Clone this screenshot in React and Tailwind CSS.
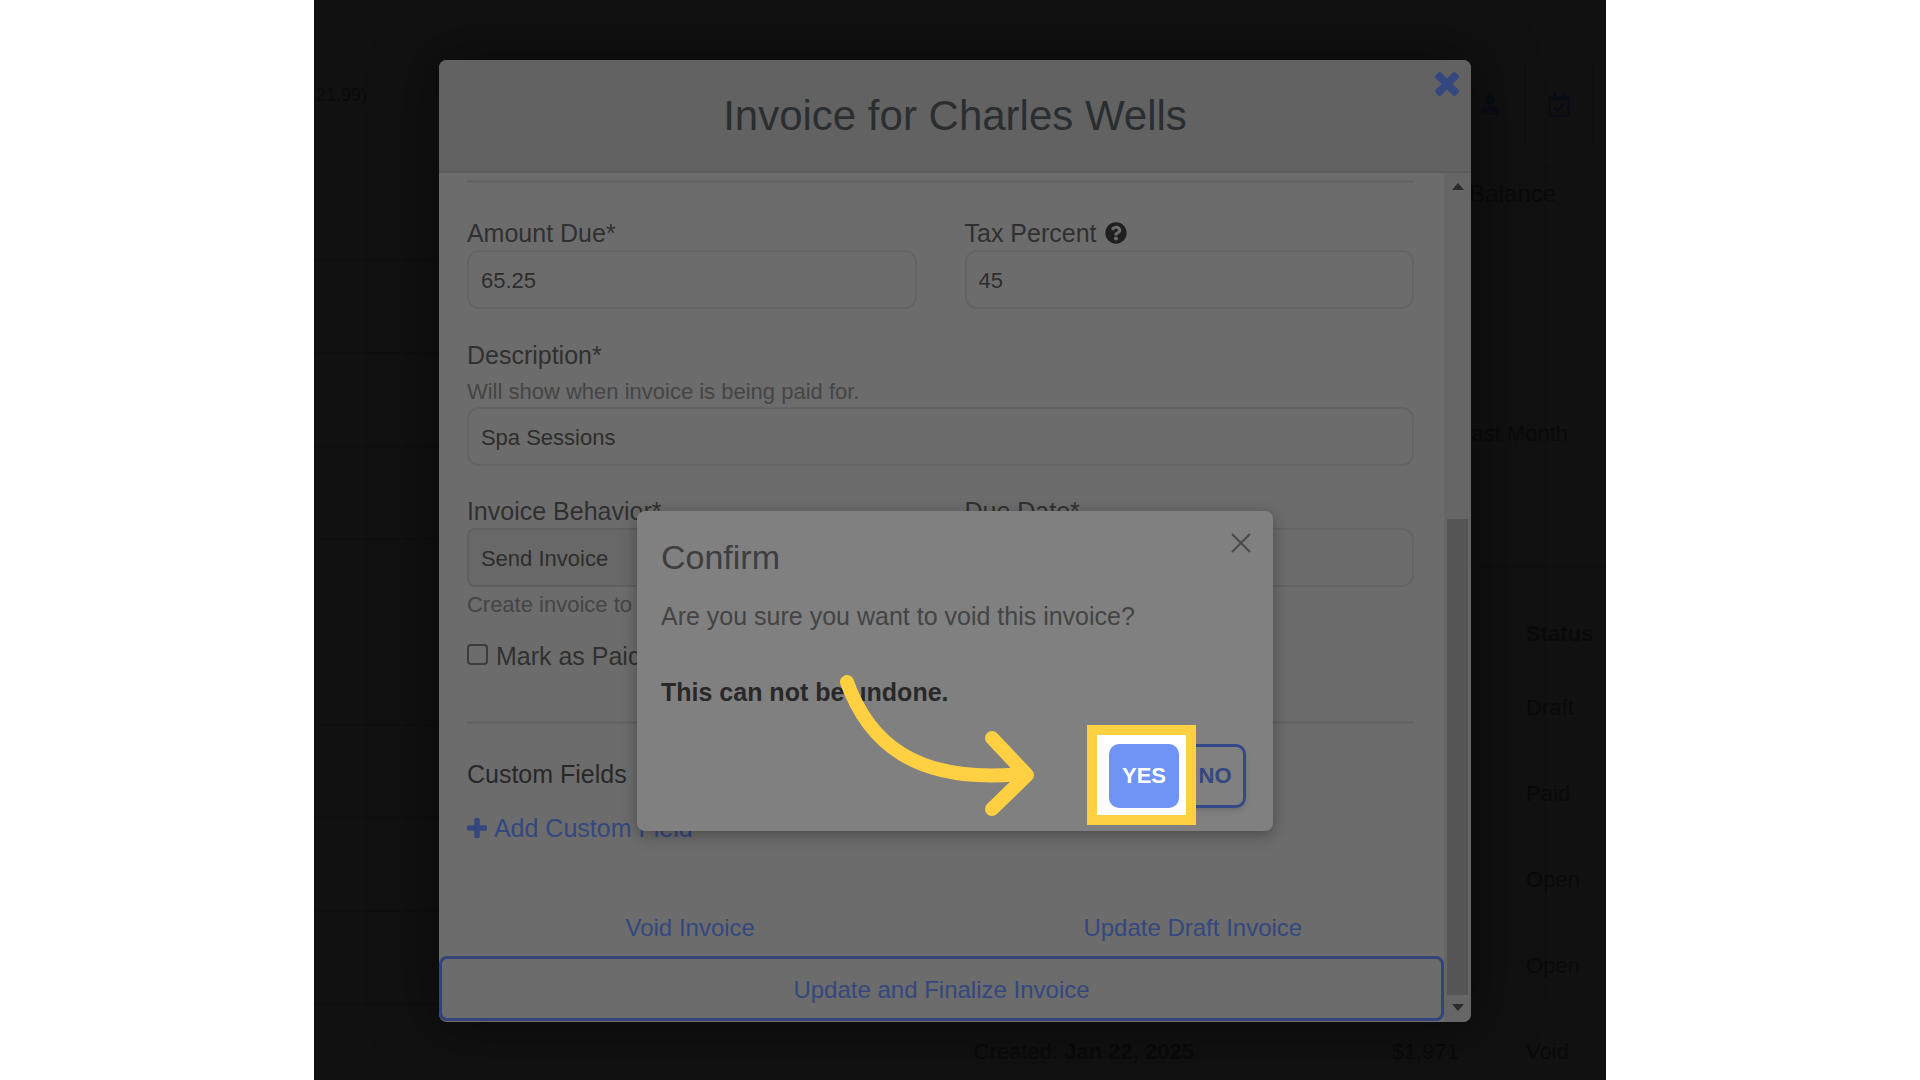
import { useState } from "react";
import { FaQuestionCircle, FaRegCalendarCheck, FaUser } from "react-icons/fa";

const statuses = ["Draft", "Paid", "Open", "Open"];

const CloseIcon = () => (
    <svg viewBox="110 366 1188 1188" className="h-6 w-6" fill="currentColor" aria-hidden="true">
        <path d="M1298 1322q0 40-28 68l-136 136q-28 28-68 28t-68-28l-294-294-294 294q-28 28-68 28t-68-28l-136-136q-28-28-28-68t28-68l294-294-294-294q-28-28-28-68t28-68l136-136q28-28 68-28t68 28l294 294 294-294q28-28 68-28t68 28l136 136q28 28 28 68t-28 68l-294 294 294 294q28 28 28 68z" />
    </svg>
);

const PlusIcon = () => (
    <svg viewBox="192 128 1408 1408" className="h-5 w-5" fill="currentColor" aria-hidden="true">
        <path d="M1600 736v192q0 40-28 68t-68 28h-416v416q0 40-28 68t-68 28h-192q-40 0-68-28t-28-68v-416h-416q-40 0-68-28t-28-68v-192q0-40 28-68t68-28h416v-416q0-40 28-68t68-28h192q40 0 68 28t28 68v416h416q40 0 68 28t28 68z" />
    </svg>
);

const labelClass = "flex items-center gap-2 text-[25px] leading-[30px] text-[#303030]";
const hintClass = "text-[22px] leading-[30px] text-[#454545]";
const inputClass =
    "h-[59px] w-full rounded-xl border-2 border-[#646464] bg-[#6c6c6c] px-3 pt-0.5 text-[22px] text-[#2d2d2d] outline-none";

const PageBehind = () => (
    <div className="flex h-full flex-col text-[22px] text-[#0a0a0a]">
        <header className="flex h-[168px] shrink-0 justify-between border-b border-[#0f0f0f] pt-16">
            <p className="flex h-[62px] w-[53px] items-center justify-end text-lg">21.99)</p>
            <nav className="flex h-[82px] text-[#0a0c14]">
                <a href="#profile" aria-label="Profile" className="flex w-[70px] items-center justify-center border-r-2 border-[#0f0f0f]">
                    <FaUser className="h-5 w-5" />
                </a>
                <a href="#calendar" aria-label="Calendar" className="mr-3 flex w-[68px] items-center justify-center border-r-2 border-[#0f0f0f]">
                    <FaRegCalendarCheck className="h-6 w-6" />
                </a>
            </nav>
        </header>

        <div className="flex min-h-0 flex-1">
            <ul className="w-[168px] shrink-0 border-r border-[#0f0f0f]">
                {Array.from({ length: 10 }).map((_, i) => (
                    <li key={i} className="h-[93px] border-b-2 border-[#0f0f0f]"></li>
                ))}
            </ul>
            <section className="flex-1">
                <p className="pt-2.5 pr-[50px] text-right text-2xl">Balance</p>
                <p className="pt-[208px] pr-[38px] text-right leading-[32px]">Last Month</p>
                <table className="mt-[115px] w-full border-t-2 border-[#0f0f0f] text-left">
                    <thead>
                        <tr className="h-[98px] align-bottom">
                            <th></th>
                            <th></th>
                            <th className="w-20 pb-3.5 font-bold">Status</th>
                        </tr>
                    </thead>
                    <tbody>
                        {statuses.map((status, i) => (
                            <tr key={i} className="h-[86px]">
                                <td></td>
                                <td></td>
                                <td>{status}</td>
                            </tr>
                        ))}
                        <tr className="h-[86px]">
                            <td className="w-[712px] text-right">
                                Created: <b>Jan 22, 2025</b>
                            </td>
                            <td className="pr-[67px] text-right">$1,971</td>
                            <td>Void</td>
                        </tr>
                    </tbody>
                </table>
            </section>
        </div>
    </div>
);

const ScrollBar = () => (
    <div className="flex w-[27px] shrink-0 flex-col items-center bg-[#666666]" aria-hidden="true">
        <svg viewBox="0 0 12 7" className="mt-[10px] h-[7px] w-3" fill="#2b2b2b">
            <path d="M6 0l6 7H0z" />
        </svg>
        <div className="flex-[329]"></div>
        <div className="w-[21px] flex-[476] bg-[#555555]"></div>
        <svg viewBox="0 0 12 7" className="mt-[9px] mb-[11px] h-[7px] w-3" fill="#2b2b2b">
            <path d="M6 7L0 0h12z" />
        </svg>
    </div>
);

const InvoiceModal = () => (
    <div className="flex h-full flex-col overflow-hidden rounded-lg bg-[#6c6c6c] shadow-[0_0_60px_10px_rgba(0,0,0,0.35)]">
        <div className="relative flex h-[113px] shrink-0 items-center justify-center border-b-2 border-[#5c5c5c] bg-[#626262]">
            <h1 className="text-[42px] text-[#2b2e30]">Invoice for Charles Wells</h1>
            <button type="button" aria-label="Close invoice" className="absolute top-3 right-3 text-[#34477f]">
                <CloseIcon />
            </button>
        </div>

        <div className="flex min-h-0 flex-1">
            <form className="min-w-0 flex-1 overflow-hidden">
                <div className="pr-[30px] pl-7">
                    <hr className="mt-[7px] border-t-[3px] border-[#646464]" />

                    <div className="mt-[35px] grid grid-cols-2 gap-x-12">
                        <div>
                            <label htmlFor="amount" className={labelClass}>Amount Due*</label>
                            <input id="amount" defaultValue="65.25" className={`mt-0.5 ${inputClass}`} />
                        </div>
                        <div>
                            <label htmlFor="tax" className={labelClass}>
                                Tax Percent <FaQuestionCircle className="h-[22px] w-[22px] text-[#1f1f1f]" />
                            </label>
                            <input id="tax" defaultValue="45" className={`mt-0.5 ${inputClass}`} />
                        </div>
                    </div>

                    <div className="mt-[31px]">
                        <label htmlFor="description" className={labelClass}>Description*</label>
                        <p className={`mt-[7px] ${hintClass}`}>Will show when invoice is being paid for.</p>
                        <input id="description" defaultValue="Spa Sessions" className={inputClass} />
                    </div>

                    <div className="mt-[30px] grid grid-cols-2 gap-x-12">
                        <div>
                            <label htmlFor="behavior" className={labelClass}>Invoice Behavior*</label>
                            <select
                                id="behavior"
                                className="mt-0.5 h-[59px] w-full appearance-none rounded-lg border-2 border-[#606060] bg-[#686868] px-3 pt-0.5 text-[22px] text-[#2d2d2d]"
                            >
                                <option>Send Invoice</option>
                            </select>
                            <p className={`mt-[3px] ${hintClass}`}>Create invoice to send</p>
                        </div>
                        <div>
                            <label htmlFor="due" className={labelClass}>Due Date*</label>
                            <input id="due" className={`mt-0.5 ${inputClass}`} />
                        </div>
                    </div>

                    <label className={`mt-[21px] ${labelClass}`}>
                        <input
                            type="checkbox"
                            className="mb-1 h-[21px] w-[21px] appearance-none rounded border-2 border-[#3c3c3c]"
                        />
                        Mark as Paid
                    </label>

                    <hr className="mt-[50px] border-t-[3px] border-[#646464]" />

                    <h2 className="mt-[35px] text-[25px] leading-[30px] text-[#282828]">Custom Fields</h2>
                    <button type="button" className="mt-6 flex items-center gap-[7px] text-[25px] leading-[30px] text-[#34477f]">
                        <PlusIcon /> Add Custom Field
                    </button>
                </div>

                <div className="mt-[70px] grid grid-cols-2 text-2xl text-[#34477f]">
                    <button type="button" className="leading-[30px]">Void Invoice</button>
                    <button type="button" className="leading-[30px]">Update Draft Invoice</button>
                </div>
                <button type="submit" className="mt-[13px] h-[65px] w-full rounded-lg border-3 border-[#324479] pt-0.5 text-2xl text-[#34477f]">
                    Update and Finalize Invoice
                </button>
            </form>
            <ScrollBar />
        </div>
    </div>
);

const ConfirmDialog = ({ onClose }) => (
    <div
        role="dialog"
        aria-labelledby="confirm-title"
        className="relative w-[636px] rounded-lg bg-[#808080] pt-[26px] pr-[27px] pb-[23px] pl-6 text-[25px] leading-[30px] text-[#444444] shadow-[0_4px_16px_rgba(0,0,0,0.3)]"
    >
        <h2 id="confirm-title" className="text-[34px] leading-10 text-[#3e3e3e]">Confirm</h2>
        <button type="button" aria-label="Close" onClick={onClose} className="absolute top-[22px] right-[22px] text-[#4a4a4a]">
            <svg viewBox="0 0 20 20" className="h-5 w-5" stroke="currentColor" strokeWidth="2" aria-hidden="true">
                <path d="M1 1l18 18M19 1L1 19" />
            </svg>
        </button>
        <p className="mt-6">Are you sure you want to void this invoice?</p>
        <p className="mt-[46px] font-bold text-[#282828]">This can not be undone.</p>

        <div className="mt-[37px] flex justify-end gap-[5px] text-[22px] font-bold">
            <div className="relative">
                {/* callout frame around the highlighted action */}
                <span className="absolute -top-[19px] -right-[17px] -bottom-[17px] -left-[22px] z-10 border-10 border-[#ffd042] bg-white"></span>
                <button type="button" onClick={onClose} className="relative z-20 h-16 w-[70px] rounded-[10px] bg-[#7094f5] text-white">
                    YES
                </button>
            </div>
            <button type="button" onClick={onClose} className="h-16 w-[62px] rounded-[10px] border-3 border-[#35488a] text-[#35477f] shadow-md">
                NO
            </button>
        </div>

        <svg viewBox="838 672 200 146" className="absolute top-[161px] left-[201px] h-[146px] w-[200px]" fill="none" stroke="#ffd042" strokeWidth="14" strokeLinecap="round" strokeLinejoin="round" aria-hidden="true">
            <path d="M847 682C868 741 914 784 1020 774" />
            <path d="M992 738L1027 775L992 809" />
        </svg>
    </div>
);

const App = () => {
    const [confirmOpen, setConfirmOpen] = useState(true);

    return (
        <div className="h-screen bg-white font-['Liberation_Sans',Arial,sans-serif]">
            <main className="relative mx-auto h-full w-[67.3%] overflow-hidden bg-[#111111]">
                <PageBehind />
                <div className="absolute inset-0 pt-[60px] pr-[135px] pb-[58px] pl-[125px]">
                    <InvoiceModal />
                </div>
                {confirmOpen && (
                    <div className="absolute inset-0 flex items-start justify-center pt-[511px] pr-[135px] pl-[125px]">
                        <ConfirmDialog onClose={() => setConfirmOpen(false)} />
                    </div>
                )}
            </main>
        </div>
    );
};

export default App;
